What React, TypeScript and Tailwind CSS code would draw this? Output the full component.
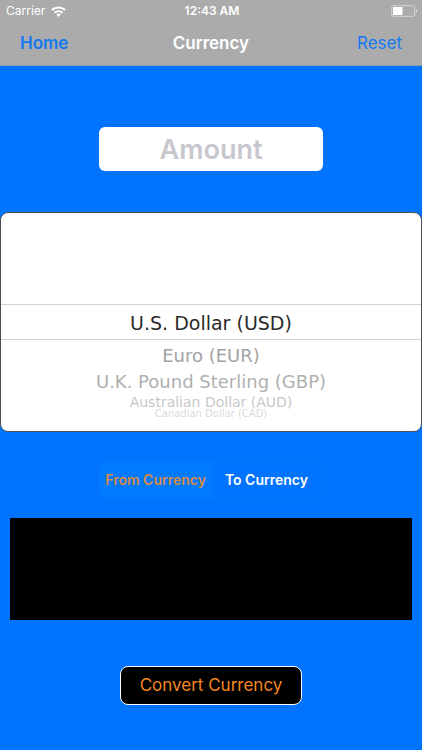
import { useState } from "react";
import { clsx } from "clsx";

const CURRENCIES = [
  { name: "U.S. Dollar (USD)", row: "h-9 border-y border-[#d2d2d4] pt-0.5 text-[19px] text-[#2a2a2a]" },
  { name: "Euro (EUR)", row: "h-[30px] pt-0.5 text-lg text-[#a3a3a3]" },
  { name: "U.K. Pound Sterling (GBP)", row: "h-6 text-lg text-[#b0b0b0]" },
  { name: "Australian Dollar (AUD)", row: "h-[15px] text-sm text-[#c8c8c8]" },
  { name: "Canadian Dollar (CAD)", row: "h-2.5 text-[10px] text-[#dadada]" },
];

const DIRECTIONS = [
  { id: "from", label: "From Currency" },
  { id: "to", label: "To Currency" },
];

function WifiIcon() {
  return (
    <svg viewBox="0 0 15 11" className="h-[11px] w-[15px]" aria-hidden="true">
      <g fill="none" stroke="#fff" strokeWidth="2.1">
        <path d="M0.9 4.1C4.6.6 10.4.6 14.1 4.1" />
        <path d="M3.4 6.8c2.3-2.1 5.9-2.1 8.2 0" />
      </g>
      <path d="M5.1 8.5c1.4-1.2 3.4-1.2 4.8 0L7.5 10.9z" fill="#fff" />
    </svg>
  );
}

function BatteryIcon() {
  return (
    <svg viewBox="0 0 27 12" className="h-3 w-[27px]" aria-hidden="true">
      <rect x="0.7" y="0.7" width="23" height="10.6" rx="2" fill="none" stroke="#d6d6d6" />
      <rect x="2" y="2" width="9.5" height="8" rx="0.6" fill="#fff" />
      <path d="M25 4.2c1.7.5 1.7 3.1 0 3.6z" fill="#d6d6d6" />
    </svg>
  );
}

function StatusBar() {
  return (
    <div className="grid h-[22px] grid-cols-3 items-center pr-1 pl-1.5 text-xs text-white">
      <div className="flex items-center gap-1.5">
        <span>Carrier</span>
        <WifiIcon />
      </div>
      <span className="text-center font-semibold whitespace-nowrap">12:43 AM</span>
      <div className="flex justify-end">
        <BatteryIcon />
      </div>
    </div>
  );
}

export default function App() {
  const [amount, setAmount] = useState("");
  const [currency, setCurrency] = useState(CURRENCIES[0].name);
  const [direction, setDirection] = useState("from");

  return (
    <div className="min-h-screen bg-[#0073ff] font-[Inter,sans-serif]">
      <header className="border-b border-[#8e9aa8] bg-[#ababab]">
        <StatusBar />
        <nav className="grid h-[43px] grid-cols-3 items-center px-5 text-[17px]">
          <a href="#home" className="justify-self-start font-semibold text-[#1479f0]">
            Home
          </a>
          <h1 className="text-center font-semibold text-white">Currency</h1>
          <button
            type="button"
            onClick={() => setAmount("")}
            className="justify-self-end text-[#1479f0]"
          >
            Reset
          </button>
        </nav>
      </header>

      <main className="flex flex-col items-center pt-[61px]">
        <input
          type="text"
          inputMode="decimal"
          aria-label="Amount"
          placeholder="Amount"
          value={amount}
          onChange={(e) => setAmount(e.target.value)}
          className="h-11 w-[53%] rounded-md bg-white text-center text-[27px] font-semibold text-black outline-none placeholder:text-[#c7c7cd]"
        />

        <div
          role="listbox"
          aria-label="Currency"
          className="mt-[41px] h-[220px] w-full rounded-lg border border-[#4a5058] bg-white pt-[91px] font-['DejaVu_Sans',sans-serif]"
        >
          {CURRENCIES.map((item) => (
            <button
              key={item.name}
              type="button"
              role="option"
              aria-selected={item.name === currency}
              onClick={() => setCurrency(item.name)}
              className={clsx("flex w-full items-center justify-center", item.row)}
            >
              <span className="leading-none">{item.name}</span>
            </button>
          ))}
        </div>

        <div className="mt-[30px] grid h-9 w-[53%] grid-cols-2 rounded border border-[#0878ff] text-sm font-semibold whitespace-nowrap">
          {DIRECTIONS.map(({ id, label }) => (
            <button
              key={id}
              type="button"
              aria-pressed={direction === id}
              onClick={() => setDirection(id)}
              className={clsx(direction === id ? "bg-[#007aff] text-[#d88a45]" : "text-white")}
            >
              {label}
            </button>
          ))}
        </div>

        <div className="mt-5 w-full px-2.5">
          <output className="block h-[102px] bg-black" />
        </div>

        <button
          type="button"
          className="mt-[46px] h-[39px] rounded-lg border border-white bg-black px-[19px] text-[17px] text-[#f5871f]"
        >
          Convert Currency
        </button>
      </main>
    </div>
  );
}
